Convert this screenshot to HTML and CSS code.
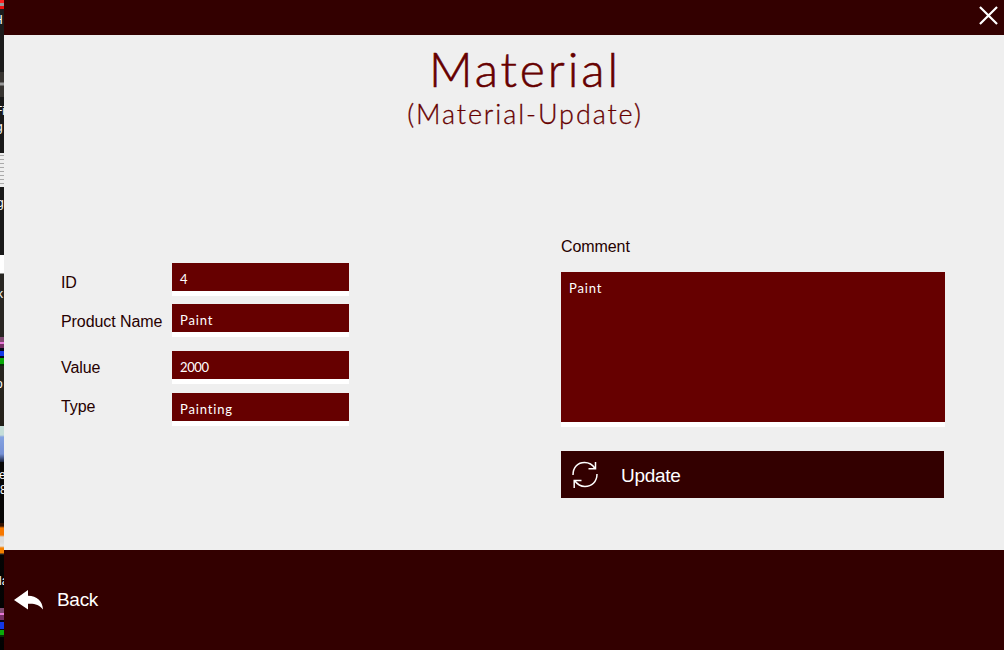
FILE: index.html
```html
<!DOCTYPE html>
<html lang="en">
<head>
<meta charset="utf-8">
<title>Material</title>
<link rel="stylesheet" href="styles.css">
</head>
<body>
<div class="screen">
  <aside class="desktop">
    <span class="caption cap-1">H</span>
    <span class="caption cap-2">Fi</span>
    <span class="caption cap-3">g</span>
    <span class="caption cap-4">g</span>
    <span class="caption cap-5">k</span>
    <span class="caption cap-6">o</span>
    <span class="caption cap-7">e</span>
    <span class="caption cap-8">8</span>
    <span class="caption cap-9">la</span>
  </aside>
  <div class="window">
    <header class="titlebar">
      <svg class="close" viewBox="0 0 20 20"><path d="M1 1 19 19M19 1 1 19"/></svg>
    </header>
    <main class="content">
      <div class="heading">
        <h1 class="title">Material</h1>
        <h2 class="subtitle">(Material-Update)</h2>
      </div>
      <div class="columns">
        <form class="fields">
          <div class="row row-id"><label class="label">ID</label><div class="field digits">4</div></div>
          <div class="row row-name"><label class="label">Product Name</label><div class="field">Paint</div></div>
          <div class="row row-value"><label class="label">Value</label><div class="field digits">2000</div></div>
          <div class="row row-type"><label class="label">Type</label><div class="field">Painting</div></div>
        </form>
        <section class="side">
          <label class="label">Comment</label>
          <div class="comment">Paint</div>
          <div class="update">
            <svg class="sync" viewBox="0 0 26 28"><path d="M1 14C1 6 6 1.500 12.500 1.500C17 1.500 20.500 3.500 23 7.500M23.500 1V7.700H16.500M25 13C25 21 19.500 25.500 13 25.500C8.500 25.500 5 23 2.500 19.500M2.200 27V19.500H9.500"/></svg>
            <span class="update-text">Update</span>
          </div>
        </section>
      </div>
    </main>
    <footer class="footer">
      <svg class="arrow" viewBox="0 0 29 20"><path d="M0 10 14 0V5.800C23 6 28.500 11 29 19.500C25 14.500 21 13.500 14 13.800V19.500Z"/></svg>
      <span class="back-text">Back</span>
    </footer>
  </div>
</div>
</body>
</html>
```
FILE: styles.css
```css
body {
  margin: 0;
  font-family: "Liberation Sans", Arial, sans-serif;
}
.screen {
  display: flex;
  width: 1004px;
  height: 650px;
  overflow: hidden;
}
.desktop {
  position: relative;
  flex: none;
  width: 4px;
  height: 650px;
  overflow: hidden;
  background:
    repeating-linear-gradient(#eee 0 2px, #aaa 2px 3px, #eee 3px 4px) 0 153px / 4px 34px no-repeat,
    linear-gradient(#7f4a70 0 5px, #e878d8 5px 7px, #753064 7px 11px, #070719 11px 14px, #1238e8 14px 19px, #05051d 19px 21px, #0aaa0a 21px 27px, #073007 27px) 0 337px / 4px 29px no-repeat,
    linear-gradient(#c5ddd8 0 9px, #84a2e0 11px, #7590d5 28px, #17203b 36px) 0 426px / 4px 36px no-repeat,
    linear-gradient(#351300 0 3px, #f77800 5px 12px, #ddd 14px 19px, #e6e6e6 23px, #f58000 25px 30px, #222 31px) 0 523px / 4px 32px no-repeat,
    linear-gradient(#7f4a70 0 5px, #e878d8 5px 7px, #753064 7px 12px, #070719 12px 14px, #1238e8 14px 21px, #05051d 21px 22px, #0aaa0a 22px 27px, #073007 27px) 0 608px / 4px 29px no-repeat,
    linear-gradient(#f22 0 3px, #999 3px 6px, #e11 6px 9px, #1b1b1b 9px 72px, #373431 72px 82px, #999 83px 85px, #373431 86px 97px, #191919 97px 255px, #fff 255px 273px, #282622 274px 350px, #25211a 420px, #080706 463px, #020202 650px);
}
.caption {
  position: absolute;
  left: 0;
  color: #fff;
  font-size: 12px;
  line-height: 14px;
  white-space: nowrap;
}
.cap-1 { top: 13px; left: -6px; }
.cap-2 { top: 104px; left: -5px; }
.cap-3 { top: 120px; left: -4px; }
.cap-4 { top: 196px; left: -3px; }
.cap-5 { top: 287px; left: -3px; }
.cap-6 { top: 377px; left: -4px; }
.cap-7 { top: 468px; left: -1px; }
.cap-8 { top: 483px; }
.cap-9 { top: 574px; left: -1px; }
.window {
  display: flex;
  flex-direction: column;
  width: 1000px;
  background: #efefef;
}
.titlebar {
  display: flex;
  justify-content: flex-end;
  box-sizing: border-box;
  height: 35px;
  padding: 6px 6px 0 0;
  background: #330000;
}
.close {
  width: 19px;
  height: 19px;
  fill: none;
  stroke: #fff;
  stroke-width: 2.3;
}
.content {
  height: 515px;
}
.heading {
  display: flex;
  flex-direction: column;
  align-items: center;
  height: 202px;
  padding-left: 42px;
  color: #660000;
  font-family: "Century Gothic", Lato, sans-serif;
}
.title, .subtitle {
  margin: 0;
  white-space: nowrap;
}
.title {
  margin-top: 5px;
  font-size: 48px;
  font-weight: 300;
  line-height: 57px;
  letter-spacing: 2.9px;
  -webkit-text-stroke: 0.6px #660000;
}
.subtitle {
  font-size: 27px;
  font-weight: 300;
  line-height: 34px;
  letter-spacing: 1.9px;
  -webkit-text-stroke: 0.3px #660000;
}
.columns {
  display: flex;
  padding-left: 57px;
}
.fields {
  width: 288px;
  margin-right: 212px;
  padding-top: 26px;
}
.row {
  display: grid;
  grid-template-columns: 111px 177px;
  height: 33px;
}
.row-id { margin-bottom: 8px; }
.row-name { margin-bottom: 14px; }
.row-value { margin-bottom: 9px; }
.row-id .label { padding-top: 11px; }
.row-name .label { padding-top: 9px; }
.row-value .label { padding-top: 8px; }
.row-type .label { padding-top: 5px; }
.label {
  display: block;
  color: #260000;
  font-size: 16px;
  line-height: 18px;
  letter-spacing: -0.08px;
  white-space: nowrap;
}
.field, .comment {
  box-sizing: border-box;
  background: #660000;
  border-bottom: 5px solid #fff;
  color: #fff;
  font-family: "Century Gothic", Lato, sans-serif;
  font-size: 13px;
  line-height: 16px;
  letter-spacing: 0.85px;
}
.field {
  height: 33px;
  padding: 8px 8px 0;
}
.digits {
  letter-spacing: -0.4px;
}
.side {
  width: 384px;
  padding-top: 1px;
}
.comment {
  height: 155px;
  margin-top: 16px;
  padding: 8px 8px 0;
}
.update {
  display: flex;
  align-items: center;
  box-sizing: border-box;
  width: 383px;
  height: 47px;
  margin-top: 24px;
  padding-left: 11px;
  background: #330000;
  color: #fff;
}
.sync {
  width: 26px;
  height: 28px;
  margin-right: 23px;
  fill: none;
  stroke: #fff;
  stroke-width: 1.5;
}
.update-text, .back-text {
  font-size: 19px;
  line-height: 22px;
  letter-spacing: -0.3px;
}
.update-text {
  padding-top: 2px;
}
.footer {
  display: flex;
  align-items: center;
  height: 100px;
  padding-left: 10px;
  background: #330000;
  color: #fff;
}
.arrow {
  width: 29px;
  height: 20px;
  margin-right: 14px;
  fill: #fff;
}
```
